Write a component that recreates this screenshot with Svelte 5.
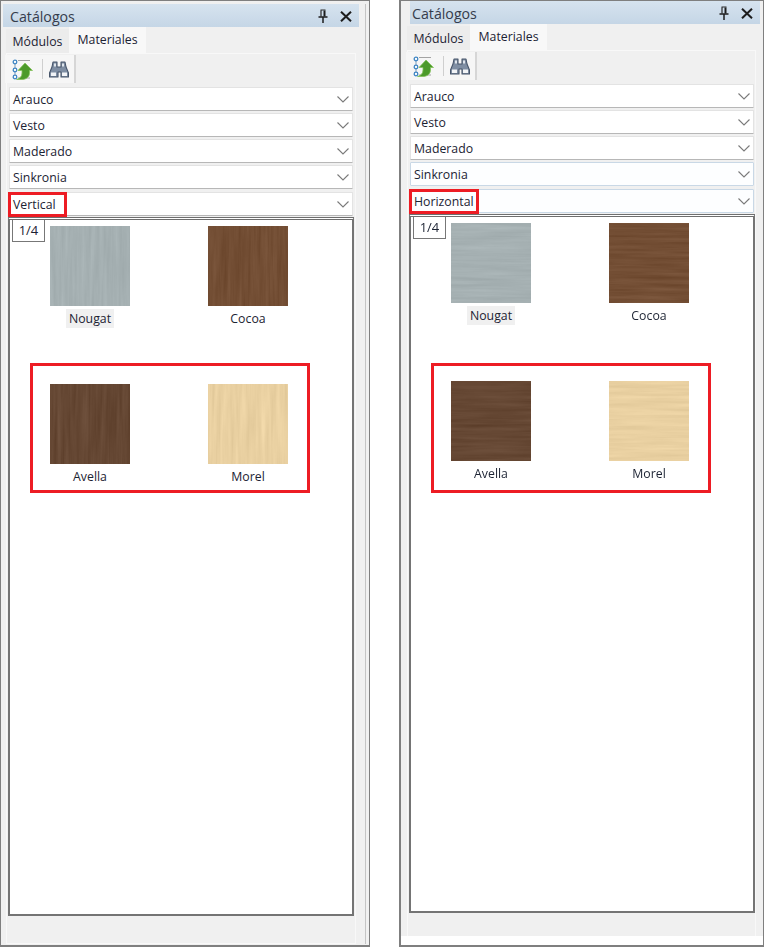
<script lang="ts">
	const filters = ['Arauco', 'Vesto', 'Maderado', 'Sinkronia'];

	const materials = [
		{ name: 'Nougat', base: [165, 176, 178], spread: 0.08 },
		{ name: 'Cocoa', base: [115, 78, 52], spread: 0.11 },
		{ name: 'Avella', base: [101, 71, 51], spread: 0.1 },
		{ name: 'Morel', base: [233, 208, 161], spread: 0.09 }
	];

	const panels = [
		{ id: 'v', side: 'left', grain: 'Vertical', freq: '0.26 0.014', hover: false },
		{ id: 'h', side: 'right', grain: 'Horizontal', freq: '0.014 0.26', hover: true }
	];

	function channel(value: number, spread: number) {
		return [spread, 0, 0, 0, value / 255 - spread / 2].join(' ');
	}

	function woodMatrix(base: number[], spread: number) {
		return [channel(base[0], spread), channel(base[1], spread), channel(base[2], spread), '0 0 0 0 1'].join(' ');
	}
</script>

{#snippet pinIcon()}
	<svg width="10" height="14" viewBox="0 0 10 14" aria-hidden="true">
		<path d="M2.500 1h5M3 1.500v6" fill="none" stroke="#2a2a2a" stroke-width="1.200" />
		<path d="M6.500 1.500v6" fill="none" stroke="#1c1c1c" stroke-width="2" />
		<path d="M0.500 8h9M5 8v6" fill="none" stroke="#1c1c1c" stroke-width="1.500" />
	</svg>
{/snippet}

{#snippet closeIcon()}
	<svg width="12" height="11" viewBox="0 0 12 11" aria-hidden="true">
		<path d="M1 0.700l10 9.600M11 0.700l-10 9.600" fill="none" stroke="#1d1d1d" stroke-width="2" />
	</svg>
{/snippet}

{#snippet treeIcon()}
	<svg width="21" height="21" viewBox="0 0 21 21" aria-hidden="true">
		<path d="M6 1.500h12M6 19h12" stroke="#a3a3a3" stroke-width="1.200" />
		<path d="M3 4v12" stroke="#7d9cba" stroke-width="1" />
		<circle cx="3" cy="3" r="1.800" fill="#fff" stroke="#3f86c4" stroke-width="1.300" />
		<circle cx="3" cy="11" r="1.800" fill="#fff" stroke="#3f86c4" stroke-width="1.300" />
		<circle cx="3" cy="18" r="1.800" fill="#fff" stroke="#3f86c4" stroke-width="1.300" />
		<path d="M13 4l7.500 7.500H17.500V14c0 4-3.500 6.500-7.500 6.500H4.500c3.500-1 5.500-3 5.500-6.500v-2.500H6z" fill="#4c9a2a" stroke="#84c25c" stroke-width="0.800" />
	</svg>
{/snippet}

{#snippet binocularsIcon()}
	<svg width="20" height="17" viewBox="0 0 20 17" aria-hidden="true">
		<path d="M4 1h4v5h4V1h4l1 5 2.500 6v4h-7.500v-5h-3v5H0.500v-4L3 6z" fill="#7f8ea3" stroke="#47556a" stroke-width="1.100" stroke-linejoin="round" />
		<path d="M2 11.500h5v3.500H2zM13 11.500h5v3.500h-5z" fill="#f2f4f7" />
		<path d="M5 2.500h2v3H5zM13 2.500h2v3h-2z" fill="#dfe5ec" />
	</svg>
{/snippet}

{#snippet chevron()}
	<svg class="chevron" width="12" height="7" viewBox="0 0 12 7" aria-hidden="true">
		<path d="M0.500 0.500l5.500 5.500 5.500-5.500" fill="none" stroke="#7a7a7a" stroke-width="1.100" />
	</svg>
{/snippet}

{#snippet select(label: string, tinted: boolean)}
	<div class="select" class:tinted>
		<span>{label}</span>
		{@render chevron()}
	</div>
{/snippet}

<main class="page">
	{#each panels as panel}
		<section class="panel {panel.side}">
			<div class="dock">
				<header class="title">
					<span>Catálogos</span>
					<div class="title-icons">
						{@render pinIcon()}
						{@render closeIcon()}
					</div>
				</header>

				<div class="tabs">
					<div class="tab">Módulos</div>
					<div class="tab active">Materiales</div>
				</div>

				<div class="tab-body">
					<div class="toolbar">
						{@render treeIcon()}
						<i class="sep"></i>
						{@render binocularsIcon()}
					</div>

					<div class="selects">
						{#each filters as label, i}
							{@render select(label, panel.hover && i === 3)}
						{/each}
						<div class="grain-select">
							{@render select(panel.grain, panel.hover)}
							<div class="mark"></div>
						</div>
					</div>

					<div class="catalog">
						<div class="page-tag">1/4</div>
						<div class="grid">
							{#each materials as material, i}
								<figure class="item">
									<svg class="swatch" width="80" height="80" aria-hidden="true">
										<defs>
											<filter id="wood-{panel.id}-{i}" x="0" y="0" width="100%" height="100%" color-interpolation-filters="sRGB">
												<feTurbulence type="fractalNoise" baseFrequency={panel.freq} numOctaves="3" seed={i * 7 + 3} />
												<feColorMatrix type="matrix" values={woodMatrix(material.base, material.spread)} />
											</filter>
										</defs>
										<rect width="80" height="80" filter="url(#wood-{panel.id}-{i})" />
									</svg>
									<figcaption class:hovered={i === 0}>{material.name}</figcaption>
								</figure>
							{/each}
						</div>
						<div class="lower-mark"></div>
					</div>
				</div>
			</div>
		</section>
	{/each}
</main>

<style>
	:global(body) {
		background: #fff;
	}

	.page {
		display: flex;
		width: 764px;
		height: 950px;
		font-family: 'Open Sans', 'Noto Sans', sans-serif;
		font-size: 12px;
		color: #1c2333;
		filter: blur(0.3px);
	}

	.panel {
		box-sizing: border-box;
		height: 947px;
		background: #f0f0f0;
		border: 1px solid #7f7f7f;
		border-bottom-width: 2px;
	}

	.panel.left {
		width: 370px;
		padding: 3px 3px 1px 2px;
	}

	.panel.right {
		width: 365px;
		margin-left: 29px;
		padding: 0 0 0 3px;
		border-left-width: 2px;
		background: linear-gradient(#f0f0f0 935px, #fff 935px);
	}

	.dock {
		display: flex;
		flex-direction: column;
		height: 100%;
		border-right: 1px solid #c4c4c4;
		box-sizing: border-box;
	}

	.panel.right .dock {
		border-right: none;
		width: 356px;
		height: 935px;
	}

	.title {
		display: flex;
		align-items: center;
		justify-content: space-between;
		box-sizing: border-box;
		height: 23px;
		margin-right: 6px;
		padding: 1px 7px 0;
		background: linear-gradient(#d6e3ef, #c5d6e6);
		font-size: 14.200px;
		color: #353c4c;
	}

	.panel.right .title {
		margin: 0 0 0 6px;
		padding: 1px 7px 0 2px;
	}

	.title-icons {
		display: flex;
		align-items: center;
		gap: 12px;
	}

	.tabs {
		display: flex;
		align-items: flex-end;
		height: 26px;
		padding-left: 3px;
	}

	.tab {
		display: flex;
		align-items: center;
		justify-content: center;
		width: 63px;
		height: 24px;
		background: #ececec;
		font-size: 12.300px;
	}

	.tab.active {
		width: 77px;
		height: 26px;
		padding-bottom: 2px;
		box-sizing: border-box;
		background: #f8f8f8;
	}

	.tab-body {
		flex: 1;
		margin: 0 9px 0 3px;
		border: 1px solid #f8f8f8;
		padding-top: 1px;
	}

	.panel.right .tab-body {
		margin-right: 4px;
		border-bottom: none;
	}

	.toolbar {
		display: flex;
		align-items: center;
		width: 71px;
		height: 28px;
		margin-left: -2px;
		padding-left: 7px;
		box-sizing: border-box;
		background: #f6f6f6;
		border-right: 2px solid #d6d6d6;
	}

	.sep {
		width: 1px;
		height: 20px;
		margin: 0 6px 0 9px;
		background: #cfcfcf;
	}

	.selects {
		display: flex;
		flex-direction: column;
		gap: 2px;
		width: 344px;
		margin: 4px 0 0 2px;
	}

	.select {
		display: flex;
		align-items: center;
		justify-content: space-between;
		box-sizing: border-box;
		height: 24px;
		padding: 1px 3px 0 3px;
		background: #fff;
		border: 1px solid #e3e3e3;
		border-bottom: 1px solid #b7b7b7;
		border-radius: 1px;
		font-size: 12.300px;
	}

	.select.tinted {
		border-color: #c9d8e6;
		background: #fdfeff;
	}

	.grain-select {
		position: relative;
		margin-top: 1px;
	}

	.mark {
		position: absolute;
		left: -1px;
		top: 0;
		width: 59px;
		height: 25px;
		box-sizing: border-box;
		border: 3px solid #ed1c24;
	}

	.right .mark {
		width: 70px;
	}

	.catalog {
		position: relative;
		box-sizing: border-box;
		width: 346px;
		height: 699px;
		margin: 1px 0 0 1px;
		background: #fff;
		border: 2px solid #747474;
		border-top: 3px double #6e6e6e;
	}

	.page-tag {
		position: absolute;
		left: 2px;
		top: 0;
		width: 33px;
		height: 22px;
		box-sizing: border-box;
		border: 1px solid #777;
		border-top: none;
		text-align: center;
		line-height: 20px;
		font-size: 13px;
	}

	.grid {
		display: grid;
		grid-template-columns: repeat(2, 80px);
		grid-auto-rows: 158px;
		column-gap: 78px;
		padding: 6px 0 0 40px;
	}

	.item {
		margin: 0;
		display: flex;
		flex-direction: column;
		align-items: center;
	}

	.swatch {
		display: block;
	}

	figcaption {
		margin-top: 3px;
		padding: 0 3px;
		line-height: 19px;
		font-size: 12.300px;
	}

	figcaption.hovered {
		background: #f0f0f0;
	}

	.lower-mark {
		position: absolute;
		left: 20px;
		top: 143px;
		width: 280px;
		height: 130px;
		box-sizing: border-box;
		border: 3px solid #ed1c24;
	}

	.right .lower-mark {
		top: 146px;
	}
</style>
